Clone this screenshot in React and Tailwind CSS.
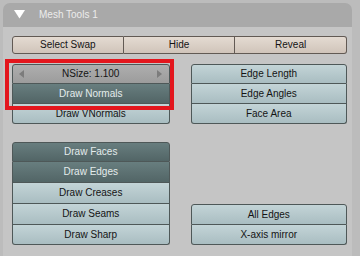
import React from "react";

const font = { fontFamily: '"Liberation Sans", Arial, sans-serif' };

const variants = {
  beige: "bg-gradient-to-b from-[#e4dbd2] to-[#d0c4ba] text-[#141414]",
  teal: "bg-gradient-to-b from-[#c3d4d7] to-[#a9bdc1] text-[#141414]",
  dark: "bg-gradient-to-b from-[#687e7f] to-[#526566] text-[#e4ecec]",
  gray: "bg-gradient-to-b from-[#aeaeae] to-[#9c9c9c] text-[#141414]",
};

function VBtn({ label, v, h, first, last }) {
  return (
    <div
      className={`${variants[v]} ${h} flex items-center justify-center border-x border-b border-[#4e5858] text-[10px] leading-none ${
        first ? "border-t rounded-t-[3px]" : ""
      } ${last ? "rounded-b-[3px]" : ""}`}
    >
      {label}
    </div>
  );
}

function HBtn({ label, first, last }) {
  return (
    <div
      className={`${variants.beige} h-[18px] flex items-center justify-center border-y border-r border-[#625a54] text-[10px] leading-none ${
        first ? "border-l rounded-l-[3px]" : ""
      } ${last ? "rounded-r-[3px]" : ""}`}
    >
      {label}
    </div>
  );
}

export default function App() {
  return (
    <div className="w-[360px] h-[256px] bg-[#bcbcbc] relative overflow-hidden" style={font}>
      <div className="ml-[3px] mt-[3px] w-[349px] h-[253px] flex flex-col">
        <div className="h-[24px] bg-[#a9a9a9] rounded-t-[7px] flex items-center pl-[11px]">
          <svg width="11" height="9" viewBox="0 0 11 9" className="mt-[-1px]">
            <polygon points="0,0 11,0 5.5,8.5" fill="#ffffff" />
          </svg>
          <span className="ml-[14px] text-[10px] text-[#ececec] leading-none">Mesh Tools 1</span>
        </div>
        <div className="flex-1 bg-[#c5c5c5] pl-[9px] pt-[9px] pr-[5px]">
          <div className="grid grid-cols-3 w-[335px]">
            <HBtn label="Select Swap" first />
            <HBtn label="Hide" />
            <HBtn label="Reveal" last />
          </div>

          <div className="mt-[10px] flex gap-[21px]">
            <div className="w-[158px] flex flex-col">
              <div className={`${variants.gray} h-[20px] flex items-center justify-between px-[6px] border border-[#4e5858] rounded-t-[3px] text-[10px] leading-none`}>
                <svg width="5" height="8" viewBox="0 0 5 8">
                  <polygon points="5,0 5,8 0,4" fill="#7c7c7c" />
                </svg>
                <span>NSize: 1.100</span>
                <svg width="5" height="8" viewBox="0 0 5 8">
                  <polygon points="0,0 0,8 5,4" fill="#7c7c7c" />
                </svg>
              </div>
              <VBtn label="Draw Normals" v="dark" h="h-[20px]" />
              <VBtn label="Draw VNormals" v="teal" h="h-[20px]" last />
            </div>
            <div className="w-[157px] flex flex-col">
              <VBtn label="Edge Length" v="teal" h="h-[20px]" first />
              <VBtn label="Edge Angles" v="teal" h="h-[20px]" />
              <VBtn label="Face Area" v="teal" h="h-[20px]" last />
            </div>
          </div>

          <div className="mt-[18px] flex gap-[21px] items-end">
            <div className="w-[158px] flex flex-col">
              <VBtn label="Draw Faces" v="dark" h="h-[20px]" first />
              <VBtn label="Draw Edges" v="dark" h="h-[21px]" />
              <VBtn label="Draw Creases" v="teal" h="h-[21px]" />
              <VBtn label="Draw Seams" v="teal" h="h-[21px]" />
              <VBtn label="Draw Sharp" v="teal" h="h-[20px]" last />
            </div>
            <div className="w-[157px] flex flex-col">
              <VBtn label="All Edges" v="teal" h="h-[21px]" first />
              <VBtn label="X-axis mirror" v="teal" h="h-[20px]" last />
            </div>
          </div>
        </div>
      </div>
      <div className="absolute left-[5px] top-[59px] w-[169px] h-[51px] border-[4px] border-[#e3161d]" />
    </div>
  );
}
